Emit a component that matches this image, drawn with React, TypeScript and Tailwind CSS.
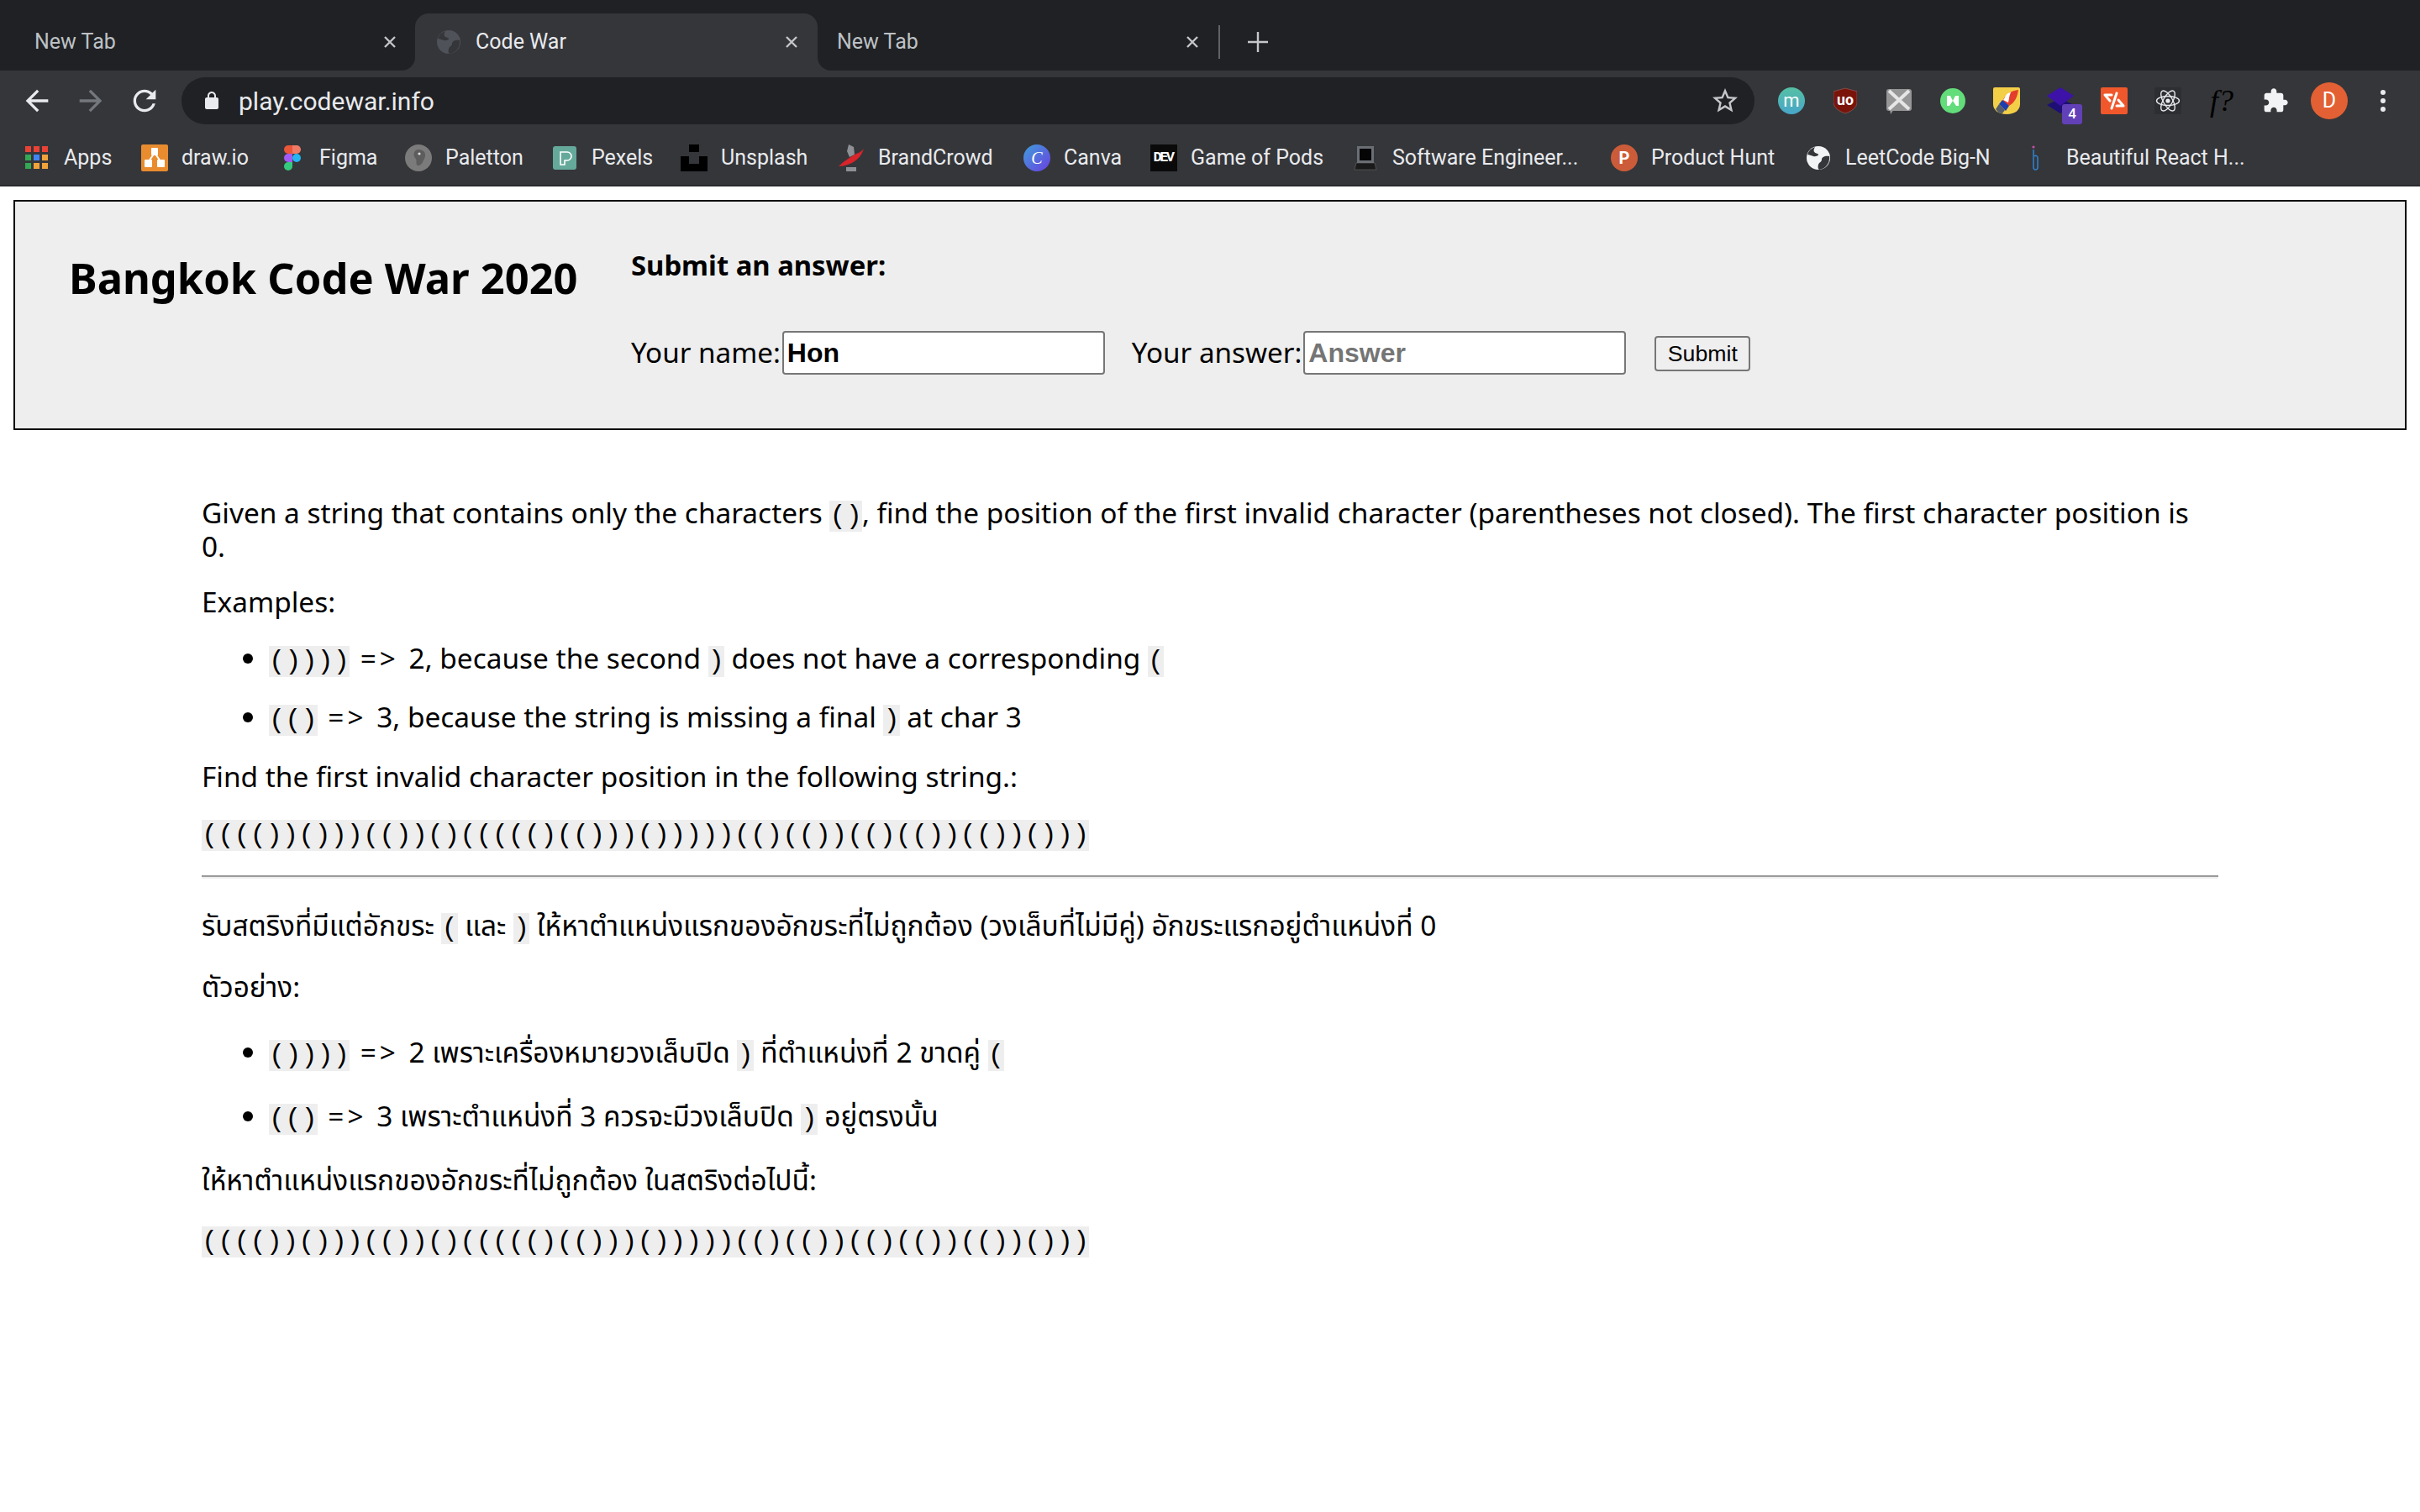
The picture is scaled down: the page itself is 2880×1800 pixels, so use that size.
import React from "react";

const P1 = "M20 11H7.83l5.59-5.59L12 4l-8 8 8 8 1.41-1.41L7.83 13H20v-2z";
const RELOAD = "M17.65 6.35C16.2 4.9 14.21 4 12 4c-4.42 0-7.99 3.58-7.99 8s3.57 8 7.99 8c3.73 0 6.84-2.55 7.73-6h-2.08c-.82 2.33-3.04 4-5.65 4-3.31 0-6-2.69-6-6s2.69-6 6-6c1.66 0 3.14.69 4.22 1.78L13 11h7V4l-2.35 2.35z";
const STAR = "M22 9.24l-7.19-.62L12 2 9.19 8.63 2 9.24l5.46 4.73L5.82 21 12 17.27 18.18 21l-1.63-7.03L22 9.24zM12 15.4l-3.76 2.27 1-4.28-3.32-2.88 4.38-.38L12 6.1l1.71 4.04 4.38.38-3.32 2.88 1 4.28L12 15.4z";
const PUZZLE = "M20.5 11H19V7c0-1.1-.9-2-2-2h-4V3.5C13 2.12 11.88 1 10.5 1S8 2.12 8 3.5V5H4c-1.1 0-1.99.9-1.99 2v3.8H3.5c1.49 0 2.7 1.21 2.7 2.7s-1.21 2.7-2.7 2.7H2V20c0 1.1.9 2 2 2h3.8v-1.5c0-1.49 1.21-2.7 2.7-2.7 1.49 0 2.7 1.21 2.7 2.7V22H17c1.1 0 2-.9 2-2v-4h1.5c1.38 0 2.5-1.12 2.5-2.5S21.88 11 20.5 11z";
const LOCK = "M18 8h-1V6c0-2.76-2.24-5-5-5S7 3.24 7 6v2H6c-1.1 0-2 .9-2 2v10c0 1.1.9 2 2 2h12c1.1 0 2-.9 2-2V10c0-1.1-.9-2-2-2zm-9-2c0-1.66 1.34-3 3-3s3 1.34 3 3v2H9V6z";
const STR = "(((())()))(())()((((()(()))()))))(()(())(()(())(())()))";

const Globe = ({ bg, fg }: { bg: string; fg: string }) => (
  <svg viewBox="0 0 28 28" className="w-7 h-7">
    <circle cx="14" cy="14" r="14" fill={bg} />
    <path d="M10 1 C7 6 9 8 13 9 C16 10 12 13 8 12 C5 11 3 10 1 10 A14 14 0 0 1 10 1Z" fill={fg} />
    <path d="M27 12 C22 11 18 13 18 16 C18 19 15 19 14 22 C13 25 14 27 15 28 A14 14 0 0 0 27 12Z" fill={fg} />
  </svg>
);

const X = () => (
  <svg viewBox="0 0 16 16" className="w-4 h-4" stroke="#c4c6ca" strokeWidth="2.4">
    <path d="M2 2 L14 14 M14 2 L2 14" />
  </svg>
);

const Arrow = () => <span className="ml-1 mr-[3px] tracking-[4px]">=&gt;</span>;

const icons: Record<string, React.ReactNode> = {
  apps: (
    <svg viewBox="0 0 28 28" className="w-7 h-7">
      {[
        [0, 0, "#ea4335"], [10, 0, "#ea4335"], [20, 0, "#ea4335"],
        [0, 10, "#34a853"], [10, 10, "#4285f4"], [20, 10, "#f0a33a"],
        [0, 20, "#34a853"], [10, 20, "#f0a33a"], [20, 20, "#f0a33a"],
      ].map(([x, y, c], i) => (
        <rect key={i} x={x as number} y={y as number} width="7" height="7" fill={c as string} />
      ))}
    </svg>
  ),
  draw: (
    <svg viewBox="0 0 32 32" className="w-8 h-8">
      <rect width="32" height="32" rx="2" fill="#e98c2f" />
      <path d="M16 10 L9 20 M16 10 L23 20" stroke="#fff" strokeWidth="2" />
      <rect x="12" y="4" width="8" height="9" rx="1" fill="#fff" />
      <rect x="4" y="18" width="9" height="9" rx="1" fill="#fff" />
      <rect x="19" y="18" width="9" height="9" rx="1" fill="#fff" />
    </svg>
  ),
  figma: (
    <svg viewBox="0 0 20 30" className="w-5 h-8">
      <path d="M10 0 H5 A5 5 0 0 0 5 10 H10Z" fill="#e9563a" />
      <path d="M10 0 H15 A5 5 0 0 1 15 10 H10Z" fill="#f07a66" />
      <path d="M10 10 H5 A5 5 0 0 0 5 20 H10Z" fill="#a25cf5" />
      <circle cx="15" cy="15" r="5" fill="#24b5f2" />
      <path d="M5 20 H10 V25 A5 5 0 1 1 5 20Z" fill="#35c97e" />
    </svg>
  ),
  paletton: (
    <svg viewBox="0 0 32 32" className="w-8 h-8">
      <circle cx="16" cy="16" r="16" fill="#7b7b7b" />
      <path d="M16 6 C23 6 26 11 23 17 C21 21 19 26 15 25 C12 24 15 19 12 16 C9 12 11 6 16 6Z" fill="#5d5d5d" />
      <circle cx="17" cy="11" r="1.6" fill="#ddd" />
    </svg>
  ),
  pexels: (
    <svg viewBox="0 0 28 28" className="w-7 h-7">
      <rect width="28" height="28" rx="3" fill="#65a99b" />
      <path d="M9 7 H17 A5 5 0 0 1 17 17 H14 V22 H9Z" fill="none" stroke="#fff" strokeWidth="1.6" />
    </svg>
  ),
  unsplash: (
    <svg viewBox="0 0 32 32" className="w-8 h-8">
      <path d="M10 0 H22 V9 H10Z M0 14 H10 V23 H22 V14 H32 V32 H0Z" fill="#000" />
    </svg>
  ),
  brand: (
    <svg viewBox="0 0 32 32" className="w-8 h-8">
      <path d="M13 0 L19 3 L20 12 L14 15 L11 8Z" fill="#8e9096" />
      <path d="M31 5 C27 18 16 25 1 26 C7 20 14 16 20 12 C25 10 29 8 31 5Z" fill="#d8242a" />
      <rect x="10" y="27" width="12" height="5" fill="#8e9096" />
    </svg>
  ),
  canva: (
    <svg viewBox="0 0 32 32" className="w-8 h-8">
      <defs>
        <linearGradient id="cv" x1="0" y1="0" x2="1" y2="1">
          <stop offset="0" stopColor="#3f9fdc" />
          <stop offset="1" stopColor="#6a3fe0" />
        </linearGradient>
      </defs>
      <circle cx="16" cy="16" r="16" fill="url(#cv)" />
      <text x="16" y="23" fontSize="20" fontStyle="italic" textAnchor="middle" fill="#fff" fontFamily="Liberation Serif, serif">C</text>
    </svg>
  ),
  dev: (
    <div className="w-8 h-8 bg-[#0a0a0a] text-white text-[17px] font-bold flex items-center justify-center font-['Liberation_Mono',monospace] tracking-[-2.5px] pr-0.5">DEV</div>
  ),
  soft: (
    <svg viewBox="0 0 32 32" className="w-8 h-8">
      <rect x="6" y="2" width="20" height="20" fill="#6b6f75" />
      <rect x="9" y="5" width="14" height="14" fill="#050505" />
      <path d="M5 22 H27 L29 30 H3Z" fill="#1a1a1a" stroke="#777" strokeWidth="0.5" />
    </svg>
  ),
  ph: (
    <div className="w-8 h-8 rounded-full bg-[#cc5c39] text-white text-[20px] font-bold flex items-center justify-center">P</div>
  ),
  leet: <Globe bg="#f1f3f4" fg="#35363a" />,
  beaut: (
    <svg viewBox="0 0 32 32" className="w-8 h-8">
      <circle cx="9" cy="3" r="1.6" fill="#c34fa8" />
      <path d="M9 6 V27 C9 31 14 31 14 27 V16 C14 13 11 13 10 14" stroke="#2f80c9" strokeWidth="1.6" fill="none" />
    </svg>
  ),
};

const bookmarks: [string, string, string][] = [
  ["apps", "Apps", "w-[58px]"],
  ["draw", "draw.io", "w-[82px]"],
  ["figma", "Figma", "w-[68px]"],
  ["paletton", "Paletton", "w-[92px]"],
  ["pexels", "Pexels", "w-[72px]"],
  ["unsplash", "Unsplash", "w-[105px]"],
  ["brand", "BrandCrowd", "w-[139px]"],
  ["canva", "Canva", "w-[69px]"],
  ["dev", "Game of Pods", "w-[158px]"],
  ["soft", "Software Engineer...", "w-[226px]"],
  ["ph", "Product Hunt", "w-[149px]"],
  ["leet", "LeetCode Big-N", "w-[181px]"],
  ["beaut", "Beautiful React H...", "w-[215px]"],
];

const Ext = ({ children }: { children: React.ReactNode }) => (
  <div className="relative w-16 h-14 flex items-center justify-center shrink-0">{children}</div>
);

const Chrome = () => (
  <div className="bg-[#35363a] font-['Roboto',sans-serif] border-b-2 border-[#2a2b2e]">
    <div className="h-[84px] bg-[#202124] flex text-[25px]">
      <div className="w-[494px] bg-[#35363a]">
        <div className="h-full bg-[#202124] rounded-br-[16px] flex items-center pl-[41px] pr-[22px] pt-4 justify-between text-[#bdc1c6]">
          <span>New Tab</span>
          <X />
        </div>
      </div>
      <div className="w-[479px] mt-4 bg-[#35363a] rounded-t-[16px] flex items-center pl-[26px] pr-[23px] justify-between text-[#e8eaed]">
        <div className="flex items-center gap-[18px]">
          <Globe bg="#50525a" fg="#35363a" />
          <span>Code War</span>
        </div>
        <X />
      </div>
      <div className="w-[477px] bg-[#35363a]">
        <div className="h-full bg-[#202124] rounded-bl-[16px] flex items-center pl-[23px] pr-[23px] pt-4 justify-between text-[#bdc1c6]">
          <span>New Tab</span>
          <X />
        </div>
      </div>
      <div className="flex items-center pt-4">
        <div className="w-0.5 h-10 bg-[#5f6368]" />
        <svg viewBox="0 0 24 24" className="w-6 h-6 ml-[33px]" fill="#c4c6ca">
          <path d="M10.8 0 H13.2 V10.8 H24 V13.2 H13.2 V24 H10.8 V13.2 H0 V10.8 H10.8Z" />
        </svg>
      </div>
    </div>
    <div className="h-16 pt-2 flex items-center pl-3 pr-3">
      <div className="w-16 h-14 flex items-center justify-center">
        <svg viewBox="0 0 24 24" className="w-10 h-10" fill="#e8eaed"><path d={P1} /></svg>
      </div>
      <div className="w-16 h-14 flex items-center justify-center">
        <svg viewBox="0 0 24 24" className="w-10 h-10 rotate-180" fill="#74777c"><path d={P1} /></svg>
      </div>
      <div className="w-16 h-14 flex items-center justify-center">
        <svg viewBox="0 0 24 24" className="w-10 h-10" fill="#e8eaed"><path d={RELOAD} /></svg>
      </div>
      <div className="ml-3 mr-3 w-[1872px] h-14 rounded-full bg-[#202124] flex items-center pl-6 pr-[17px] justify-between">
        <div className="flex items-center gap-5">
          <svg viewBox="0 0 24 24" className="w-6 h-6" fill="#e8eaed"><path d={LOCK} /></svg>
          <span className="text-[30px] text-[#e8eaed]">play.codewar.info</span>
        </div>
        <svg viewBox="0 0 24 24" className="w-9 h-9" fill="#c4c6ca"><path d={STAR} /></svg>
      </div>
      <Ext>
        <svg viewBox="0 0 32 32" className="w-8 h-8">
          <defs>
            <linearGradient id="mg" x1="0" y1="0" x2="0" y2="1">
              <stop offset="0" stopColor="#56c0a4" />
              <stop offset="1" stopColor="#47a6c9" />
            </linearGradient>
          </defs>
          <circle cx="16" cy="16" r="16" fill="url(#mg)" />
          <text x="16" y="23" fontSize="22" textAnchor="middle" fill="#fff" fontFamily="Roboto, sans-serif">m</text>
        </svg>
      </Ext>
      <Ext>
        <svg viewBox="0 0 30 32" className="w-7 h-8">
          <path d="M15 0 L30 4 V18 C30 25 22 30 15 32 C8 30 0 25 0 18 V4Z" fill="#7a140b" stroke="#8d5a55" strokeWidth="0.8" />
          <text x="15" y="21" fontSize="19" fontWeight="700" textAnchor="middle" fill="#fff" fontFamily="Roboto, sans-serif">uo</text>
        </svg>
      </Ext>
      <Ext>
        <svg viewBox="0 0 30 32" className="w-[30px] h-8">
          <rect x="0" y="2" width="30" height="26" rx="3" fill="#969696" />
          <path d="M5 32 L4 26 H9Z" fill="#969696" />
          <path d="M3 4 L27 26 M27 4 L3 26" stroke="#e6e6e6" strokeWidth="4" />
        </svg>
      </Ext>
      <Ext>
        <svg viewBox="0 0 30 30" className="w-[30px] h-[30px]">
          <circle cx="15" cy="15" r="15" fill="#62dd7a" />
          <path d="M8 9 L12 9 L15 15 L18 9 L22 9 V21 H19 L15 15 L11 21 H8Z" fill="#fff" />
        </svg>
      </Ext>
      <Ext>
        <svg viewBox="0 0 32 32" className="w-8 h-8">
          <path d="M2 0 H30 Q32 0 32 2 V20 C32 27 26 32 16 32 C6 32 0 27 0 20 V2 Q0 0 2 0Z" fill="#f3cf48" />
          <path d="M30 3 C22 4 14 8 11 17 L19 22 C26 18 29 11 30 3Z" fill="#e33e2b" />
          <path d="M14 12 C15 8 19 6 21 6 C19 10 19 14 18 18 L12 15Z" fill="#fff" />
          <path d="M7 20 L11 15 L19 22 L15 28Z" fill="#1c3fb0" />
          <path d="M3 26 L7 20 L14 27 L11 31 C7 31 5 29 3 26Z" fill="#565c68" />
        </svg>
      </Ext>
      <Ext>
        <svg viewBox="0 0 32 32" className="w-8 h-8">
          <path d="M16 14 L32 22 L16 32 L0 22Z" fill="#1d0f75" transform="translate(0 -1)" />
          <path d="M16 0 L32 10 L16 22 L0 10Z" fill="#3d12a8" />
        </svg>
        <div className="absolute left-[34px] top-[32px] w-6 h-6 rounded-[3px] bg-[#6240b8] text-white text-[17px] font-medium flex items-center justify-center">4</div>
      </Ext>
      <Ext>
        <svg viewBox="0 0 32 32" className="w-8 h-8">
          <rect width="32" height="32" rx="2" fill="#f0582c" />
          <path d="M5 9 H13 M5 9 L11 16 M19 7 L13 25 M21 15 L27 22 M27 22 H19" stroke="#fff" strokeWidth="3" fill="none" strokeLinecap="round" />
        </svg>
      </Ext>
      <Ext>
        <svg viewBox="0 0 32 32" className="w-8 h-8">
          <rect width="32" height="32" rx="2" fill="#2d2e31" />
          <circle cx="16" cy="16" r="2.6" fill="#e8eaed" />
          <g fill="none" stroke="#e8eaed" strokeWidth="1.4">
            <ellipse cx="16" cy="16" rx="13.5" ry="5.5" />
            <ellipse cx="16" cy="16" rx="13.5" ry="5.5" transform="rotate(60 16 16)" />
            <ellipse cx="16" cy="16" rx="13.5" ry="5.5" transform="rotate(120 16 16)" />
          </g>
        </svg>
      </Ext>
      <Ext>
        <span className="font-['Liberation_Serif',serif] italic text-[36px] text-black leading-none whitespace-nowrap">f?</span>
      </Ext>
      <Ext>
        <svg viewBox="0 0 24 24" className="w-8 h-8" fill="#f1f3f4"><path d={PUZZLE} /></svg>
      </Ext>
      <Ext>
        <div className="w-11 h-11 rounded-full bg-[#e26033] text-white text-[25px] flex items-center justify-center">D</div>
      </Ext>
      <Ext>
        <div className="flex flex-col gap-1">
          <div className="w-1.5 h-1.5 rounded-full bg-[#e8eaed]" />
          <div className="w-1.5 h-1.5 rounded-full bg-[#e8eaed]" />
          <div className="w-1.5 h-1.5 rounded-full bg-[#e8eaed]" />
        </div>
      </Ext>
    </div>
    <div className="h-[72px] pt-2 flex items-center pl-7 gap-[34px] text-[25px] text-[#e8eaed]">
      {bookmarks.map(([k, label, w]) => (
        <div key={label} className="flex items-center gap-4 shrink-0">
          <div className="w-8 h-8 flex items-center justify-center">{icons[k]}</div>
          <span className={`${w} whitespace-nowrap`}>{label}</span>
        </div>
      ))}
    </div>
  </div>
);

const C = ({ children }: { children: React.ReactNode }) => (
  <code className="font-['Liberation_Mono',monospace] bg-[#eeeeee] text-[32px] leading-none">{children}</code>
);

const Page = () => (
  <div className="font-['Noto_Sans','Noto_Sans_Thai',sans-serif] text-[33.4px] text-black">
    <div className="mx-4 mt-4 h-[274px] border-2 border-black bg-[#eeeeee] flex pl-[64px]">
      <h1 className="w-[669px] shrink-0 text-[50.6px] font-bold leading-none pt-[66px]">Bangkok Code War 2020</h1>
      <div className="pt-[56px]">
        <div className="font-bold text-[32.8px] leading-[40px]">Submit an answer:</div>
        <div className="flex items-center mt-[58px] text-[33.2px]">
          <label className="mr-0.5">Your name:</label>
          <input
            defaultValue="Hon"
            className="w-[384px] h-[52px] border-2 border-[#767676] rounded-[4px] bg-white px-1 font-['Liberation_Sans',sans-serif] font-bold text-[32px] text-black"
          />
          <label className="ml-[32px] mr-0.5">Your answer:</label>
          <input
            placeholder="Answer"
            className="w-[384px] h-[52px] border-2 border-[#767676] rounded-[4px] bg-white px-1 font-['Liberation_Sans',sans-serif] font-bold text-[32px] text-black placeholder:text-[#757575]"
          />
          <button className="ml-[34px] w-[114px] h-[42px] mt-0.5 border-2 border-[#767676] rounded-[4px] bg-[#efefef] font-['Liberation_Sans',sans-serif] text-[26.67px] leading-none">
            Submit
          </button>
        </div>
      </div>
    </div>
    <div className="mx-[240px] mt-[79px] leading-[38px]">
      <p>
        Given a string that contains only the characters <C>()</C>, find the position of the first invalid character (parentheses not closed). The first character position is 0.
      </p>
      <p className="mt-[28px]">Examples:</p>
      <ul className="list-disc pl-[80px] mt-[29px]">
        <li><C>())))</C> <Arrow /> 2, because the second <C>)</C> does not have a corresponding <C>(</C></li>
        <li className="mt-[30px]"><C>(()</C> <Arrow /> 3, because the string is missing a final <C>)</C> at char 3</li>
      </ul>
      <p className="mt-[31px]">Find the first invalid character position in the following string.:</p>
      <p className="mt-[28px]"><C>{STR}</C></p>
      <hr className="mt-[31px] h-1 border-0 bg-[#eeeeee] border-t-2 border-[#9a9a9a]" />
      <p className="mt-[36px]">
        รับสตริงที่มีแต่อักขระ <C>(</C> และ <C>)</C> ให้หาตำแหน่งแรกของอักขระที่ไม่ถูกต้อง (วงเล็บที่ไม่มีคู่) อักขระแรกอยู่ตำแหน่งที่ 0
      </p>
      <p className="mt-[33px]">ตัวอย่าง:</p>
      <ul className="list-disc pl-[80px] mt-[40px]">
        <li><C>())))</C> <Arrow /> 2 เพราะเครื่องหมายวงเล็บปิด <C>)</C> ที่ตำแหน่งที่ 2 ขาดคู่ <C>(</C></li>
        <li className="mt-[36px]"><C>(()</C> <Arrow /> 3 เพราะตำแหน่งที่ 3 ควรจะมีวงเล็บปิด <C>)</C> อยู่ตรงนั้น</li>
      </ul>
      <p className="mt-[36px]">ให้หาตำแหน่งแรกของอักขระที่ไม่ถูกต้อง ในสตริงต่อไปนี้:</p>
      <p className="mt-[32px]"><C>{STR}</C></p>
    </div>
  </div>
);

export default function App() {
  return (
    <div className="min-h-[1800px] bg-white">
      <Chrome />
      <Page />
    </div>
  );
}
